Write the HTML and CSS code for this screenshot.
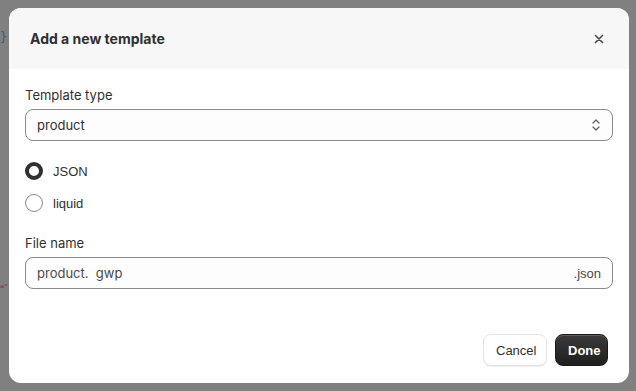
FILE: index.html
```html
<!DOCTYPE html>
<html>
<head>
<meta charset="utf-8">
<link rel="stylesheet" href="styles.css">
</head>
<body>
<div class="backdrop">
  <div class="bg-code">
    <span class="bg-brace">}</span>
    <span class="bg-attr">="</span>
  </div>
  <div class="dialog">
    <div class="dialog-header">
      <h2 class="dialog-title">Add a new template</h2>
      <button class="close-btn" aria-label="Close">
        <svg width="10" height="10" viewBox="0 0 10 10"><path d="M1.5 1.5 L8.5 8.5 M8.5 1.5 L1.5 8.5" stroke="#4a4a4a" stroke-width="1.6" stroke-linecap="round"/></svg>
      </button>
    </div>
    <div class="dialog-body">
      <div class="field">
        <label class="field-label">Template type</label>
        <div class="select">
          <span class="select-value">product</span>
          <svg class="chevrons" width="10" height="14" viewBox="0 0 10 14"><path d="M2 5 L5 2 L8 5 M2 9 L5 12 L8 9" fill="none" stroke="#616161" stroke-width="1.3" stroke-linecap="round" stroke-linejoin="round"/></svg>
        </div>
      </div>
      <div class="radios">
        <label class="radio-row"><span class="radio radio-checked"></span><span class="radio-text">JSON</span></label>
        <label class="radio-row"><span class="radio"></span><span class="radio-text">liquid</span></label>
      </div>
      <div class="field">
        <label class="field-label">File name</label>
        <div class="text-input">
          <span class="input-value">product.&nbsp; gwp</span>
          <span class="input-suffix">.json</span>
        </div>
      </div>
    </div>
    <div class="dialog-footer">
      <button class="btn btn-secondary">Cancel</button>
      <button class="btn btn-primary">Done</button>
    </div>
  </div>
</div>
</body>
</html>
```
FILE: styles.css
```css
* { box-sizing: border-box; }
html, body { margin: 0; padding: 0; }
body {
  width: 636px;
  height: 391px;
  overflow: hidden;
  font-family: Inter, "Liberation Sans", sans-serif;
  color: #303030;
}
.backdrop {
  position: relative;
  width: 636px;
  height: 391px;
  background: #808080;
  display: flex;
  align-items: center;
  justify-content: center;
}
.bg-code {
  position: absolute;
  left: 0;
  top: 0;
  width: 9px;
  height: 391px;
  font-family: "DejaVu Sans Mono", monospace;
  font-size: 12px;
}
.bg-brace {
  position: absolute;
  left: 0;
  top: 30px;
  color: #3b5a8a;
}
.bg-attr {
  position: absolute;
  left: 0;
  top: 283px;
  font-size: 7px;
  letter-spacing: -0.5px;
  color: #8a2a3a;
}
.dialog {
  width: 620px;
  height: 375px;
  background: #ffffff;
  border-radius: 12px;
  overflow: hidden;
  display: flex;
  flex-direction: column;
  margin-left: 2px;
}
.dialog-header {
  height: 61px;
  flex: none;
  background: #f7f7f7;
  display: flex;
  align-items: center;
  justify-content: space-between;
  padding: 0 21px 0 21px;
}
.dialog-title {
  margin: 0;
  font-size: 14px;
  font-weight: 700;
  color: #303030;
}
.close-btn {
  border: none;
  background: none;
  padding: 0;
  width: 16px;
  height: 16px;
  display: flex;
  align-items: center;
  justify-content: center;
  margin-right: 1px;
}
.dialog-body {
  padding: 16px 16px 0 16px;
  display: flex;
  flex-direction: column;
}
.field {
  display: flex;
  flex-direction: column;
  gap: 4px;
}
.field-label {
  font-size: 13px;
  line-height: 20px;
  color: #303030;
}
.select, .text-input {
  height: 32px;
  border: 1px solid #8a8a8a;
  border-radius: 8px;
  background: #fdfdfd;
  display: flex;
  align-items: center;
  justify-content: space-between;
  padding: 0 11px;
  font-size: 13px;
  color: #303030;
}
.radios {
  display: flex;
  flex-direction: column;
  padding-top: 20px;
  gap: 12px;
  margin-bottom: 20px;
}
.radio-row {
  display: flex;
  align-items: center;
  gap: 10px;
  height: 20px;
  font-family: "Liberation Sans", Arial, sans-serif;
  font-size: 13px;
  color: #303030;
}
.radio {
  width: 18px;
  height: 18px;
  border-radius: 50%;
  border: 1px solid #8a8a8a;
  background: #fff;
}
.radio-checked {
  border: 4.5px solid #303030;
}
.text-input .input-value { color: #4a4a4a; }
.input-suffix {
  font-family: "Liberation Sans", Arial, sans-serif;
  color: #4a4a4a;
}
.dialog-footer {
  margin-top: auto;
  display: flex;
  justify-content: flex-end;
  gap: 8px;
  padding: 0 21px 17px 0;
}
.btn {
  height: 32px;
  border-radius: 8px;
  font-family: "Liberation Sans", Arial, sans-serif;
  font-size: 13px;
  padding: 0 12px;
  cursor: pointer;
}
.btn-secondary {
  width: 64px;
  background: #ffffff;
  border: 1px solid #e3e3e3;
  color: #303030;
  font-weight: 400;
  box-shadow: 0 1px 0 rgba(0,0,0,0.06);
}
.btn-primary {
  width: 53px;
  background: linear-gradient(#3a3a3a, #1f1f1f);
  border: 1px solid #1a1a1a;
  color: #ffffff;
  font-weight: 700;
  box-shadow: inset 0 1px 0 rgba(255,255,255,0.18);
}
```
